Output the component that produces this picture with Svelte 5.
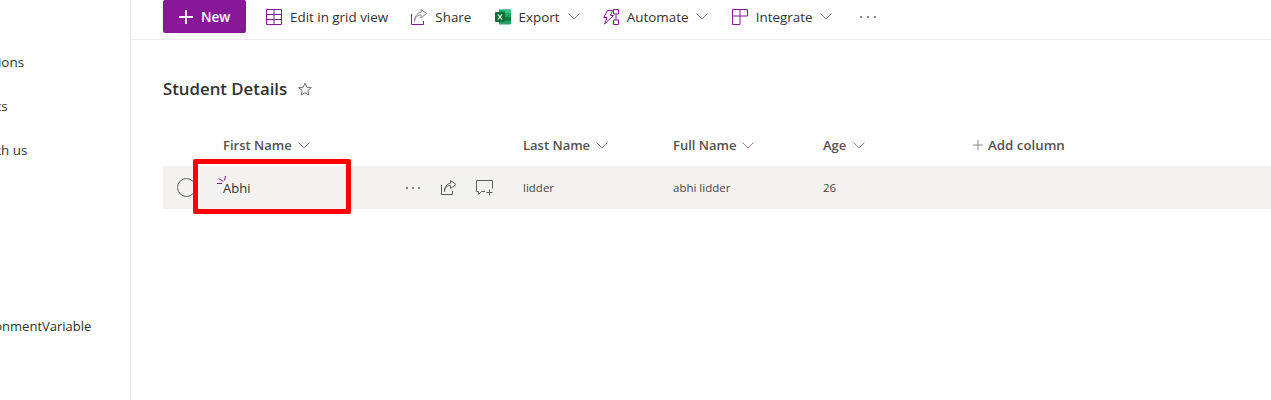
<script lang="ts">
  const navItems = [
    { label: 'Conversations', shift: 65 },
    { label: 'Documents', shift: 64 },
    { label: 'Share with us', shift: 57 }
  ];

  const columns = ['Last Name', 'Full Name', 'Age'];
  const cells = ['lidder', 'abhi lidder', '26'];
</script>

<div class="page">
  <aside class="sidebar">
    <nav class="nav">
      {#each navItems as item}
        <a class="nav-item" style="margin-left: -{item.shift}px">{item.label}</a>
      {/each}
    </nav>
    <a class="nav-item env">EnvironmentVariable</a>
  </aside>

  <main class="content">
    <div class="toolbar">
      <button class="new-btn">
        <svg width="16" height="16" viewBox="0 0 16 16"><path d="M8 1v14M1 8h14" stroke="#fff" stroke-width="1.8" /></svg>
        New
      </button>

      <div class="tool first">
        <svg width="16" height="16" viewBox="0 0 16 16" fill="none" stroke="#881798">
          <path d="M.5.5h15v15H.5zM.5 5.500h15M.5 10.500h15M8 .5v15" />
        </svg>
        <span>Edit in grid view</span>
      </div>

      <div class="tool">
        <svg width="16" height="16" viewBox="0 0 16 16" fill="none" stroke="#881798">
          <path d="M.5 5v10.500h12V12" />
          <path d="M3.500 12.500c0-4 3-6.500 6.500-6.500V9l5.500-4.500L10 .5v2.800C6 4 3.500 8 3.500 12.500z" stroke="#8a7a90" />
        </svg>
        <span>Share</span>
      </div>

      <div class="tool">
        <svg width="16" height="16" viewBox="0 0 16 16">
          <path d="M4 .5h11a1 1 0 0 1 1 1v13a1 1 0 0 1-1 1H4z" fill="#21a366" />
          <path d="M4 8h12v3.800H4z" fill="#107c41" />
          <path d="M10 .5h5a1 1 0 0 1 1 1V4h-6z" fill="#33c481" />
          <rect x="0" y="3" width="10" height="10" rx="1" fill="#0f7038" />
          <path d="M3 5.500l4 5M7 5.500l-4 5" stroke="#fff" stroke-width="1.200" />
        </svg>
        <span>Export</span>
        <svg class="chev" width="12" height="7" viewBox="0 0 12 7" fill="none" stroke="#8a8886"><path d="M.5.5 6 6l5.500-5.500" /></svg>
      </div>

      <div class="tool">
        <svg width="16" height="16" viewBox="0 0 16 16" fill="none" stroke="#881798">
          <path d="M4.500 1.500h5L7.500 6.500h3L1.500 15l2.500-6.500H.7z" />
          <path d="M10.500.5h5v4.500h-5zM10.500 11h5v4.500h-5zM13 5v6" />
        </svg>
        <span>Automate</span>
        <svg class="chev" width="12" height="7" viewBox="0 0 12 7" fill="none" stroke="#8a8886"><path d="M.5.5 6 6l5.500-5.500" /></svg>
      </div>

      <div class="tool">
        <svg width="16" height="16" viewBox="0 0 16 16" fill="none" stroke="#881798">
          <path d="M.5.5h15v6.500H.5zM8 .5V15.500M.5 7v8.500H8" />
        </svg>
        <span>Integrate</span>
        <svg class="chev" width="12" height="7" viewBox="0 0 12 7" fill="none" stroke="#8a8886"><path d="M.5.5 6 6l5.500-5.500" /></svg>
      </div>

      <div class="more">
        <i></i><i></i><i></i>
      </div>
    </div>

    <div class="title">
      <h1>Student Details</h1>
      <svg width="14" height="14" viewBox="0 0 16 16" fill="none" stroke="#605e5c">
        <path d="M8 1.200l2 4.800 5.200.4-4 3.400 1.300 5.100L8 12.200l-4.500 2.700 1.300-5.100-4-3.400L6 6z" />
      </svg>
    </div>

    <div class="list">
      <div class="head">
        <div></div>
        <div class="col">First Name
          <svg class="chev" width="12" height="7" viewBox="0 0 12 7" fill="none" stroke="#8a8886"><path d="M.5.5 6 6l5.500-5.500" /></svg>
        </div>
        {#each columns as col}
          <div class="col">{col}
            <svg class="chev" width="12" height="7" viewBox="0 0 12 7" fill="none" stroke="#8a8886"><path d="M.5.5 6 6l5.500-5.500" /></svg>
          </div>
        {/each}
        <div class="col add">
          <svg width="10" height="10" viewBox="0 0 10 10" stroke="#8a8886"><path d="M5 0v10M0 5h10" /></svg>
          Add column
        </div>
      </div>

      <div class="row">
        <div class="check"><span class="circle"></span></div>
        <div class="name-cell">
          <span class="name">
            <svg class="sparkle" width="10" height="10" viewBox="0 0 10 10" fill="none" stroke="#881798">
              <path d="M0 7.500h5M1.500 2.500l5 3M8.500 0l-1 4.500" />
            </svg>
            Abhi
          </span>
          <div class="actions">
            <div class="row-dots"><i></i><i></i><i></i></div>
            <svg width="16" height="15" viewBox="0 0 16 15" fill="none" stroke="#605e5c">
              <path d="M.5 5v9.500h11V11" />
              <path d="M3.500 11.500c0-4 2.500-6 6-6V8.500l5.500-4L9.500.5v2.700C6 3.800 3.500 7 3.500 11.500z" />
            </svg>
            <svg class="comment" width="18" height="16" viewBox="0 0 18 16" fill="none" stroke="#605e5c">
              <path d="M9 11.500H5.500l-3 3v-3H.5V.5h16v8" />
              <path d="M13.500 9.500v6M10.500 12.500h6" />
            </svg>
          </div>
        </div>
        {#each cells as cell}
          <div class="cell">{cell}</div>
        {/each}
      </div>

      <div class="highlight"></div>
    </div>
  </main>
</div>

<style>
  :global(body) {
    margin: 0;
    background: #fff;
  }

  .page {
    display: flex;
    height: 400px;
    overflow: hidden;
    font-family: "Open Sans", "Noto Sans", sans-serif;
    color: #323130;
  }

  .sidebar {
    width: 130px;
    flex-shrink: 0;
    border-right: 1px solid #edebe9;
    overflow: hidden;
    white-space: nowrap;
    font-size: 13.4px;
  }

  .nav {
    display: flex;
    flex-direction: column;
    gap: 24px;
    padding-top: 52px;
  }

  .nav-item {
    display: block;
    line-height: 20px;
  }

  .env {
    margin: 156px 0 0 -36px;
    font-size: 13px;
  }

  .content {
    flex: 1;
    min-width: 0;
  }

  .toolbar {
    display: flex;
    align-items: center;
    height: 33px;
    padding: 0 0 6px 32px;
    border-bottom: 1px solid #edebe9;
    font-size: 13.4px;
  }

  .new-btn {
    display: flex;
    align-items: center;
    gap: 7px;
    width: 83px;
    height: 33px;
    padding: 0 0 0 15px;
    border: 0;
    border-radius: 2px;
    background: #881798;
    color: #fff;
    font: 600 13.5px "Open Sans", sans-serif;
  }

  .tool {
    display: flex;
    align-items: center;
    gap: 8px;
    margin-left: 23.25px;
  }

  .tool.first {
    margin-left: 20px;
  }

  .more {
    display: flex;
    gap: 5px;
    margin-left: 28px;
  }

  .more i,
  .row-dots i {
    width: 2px;
    height: 2px;
    border-radius: 50%;
    background: #605e5c;
  }

  .title {
    display: flex;
    align-items: center;
    gap: 11px;
    padding: 36px 0 0 32px;
  }

  h1 {
    margin: 0;
    font-size: 16.8px;
    font-weight: 600;
    line-height: 26px;
  }

  .list {
    position: relative;
    margin: 22px 0 0 32px;
  }

  .head,
  .row {
    display: grid;
    grid-template-columns: 60px 300px 150px 150px 150px 1fr;
    align-items: center;
  }

  .head {
    height: 42px;
  }

  .col {
    display: flex;
    align-items: center;
    gap: 6px;
    font-size: 13px;
    font-weight: 600;
    color: #53514f;
  }

  .col:nth-child(5) {
    gap: 7px;
  }

  .add {
    gap: 5px;
    font-size: 13.3px;
  }

  .row {
    height: 43px;
    background: #f3f2f1;
  }

  .check {
    padding-left: 14px;
  }

  .circle {
    display: block;
    box-sizing: border-box;
    width: 19px;
    height: 19px;
    border: 1px solid #605e5c;
    border-radius: 50%;
  }

  .name-cell {
    display: flex;
    align-items: center;
    font-size: 13px;
  }

  .name {
    position: relative;
  }

  .sparkle {
    position: absolute;
    left: -6px;
    top: -3px;
  }

  .actions {
    display: flex;
    align-items: center;
    margin-left: auto;
    margin-right: 29px;
    gap: 19px;
  }

  .row-dots {
    display: flex;
    gap: 4px;
    margin-right: 2px;
  }

  .comment {
    margin-top: 1px;
  }

  .cell {
    padding-bottom: 1px;
    font-size: 11.5px;
    color: #484644;
  }

  .highlight {
    position: absolute;
    left: 30px;
    top: 35px;
    box-sizing: border-box;
    width: 158px;
    height: 55px;
    border: 5px solid #f00;
    border-radius: 2px;
  }
</style>
